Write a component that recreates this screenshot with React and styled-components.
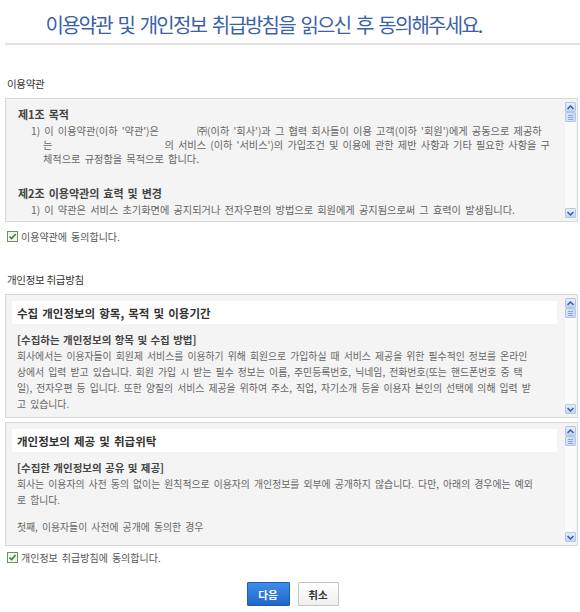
import React from "react";
import styled, { createGlobalStyle } from "styled-components";

const GlobalStyle = createGlobalStyle`
  html, body { margin: 0; padding: 0; background: #fff; }
  body {
    font-family: "Noto Sans CJK KR", "Noto Sans", sans-serif;
    color: #555;
  }
  * { box-sizing: border-box; }
`;

const Page = styled.div`
  width: 580px;
  padding-left: 5px;
  display: flex;
  flex-direction: column;
`;

const Header = styled.header`
  height: 45px;
  padding: 5px 58px 0 0;
  border-bottom: 2px solid #e2e2e2;
  display: flex;
  align-items: center;
  justify-content: center;
`;

const Title = styled.h1`
  margin: 0;
  font-size: 20px;
  font-weight: 400;
  letter-spacing: -1.8px;
  word-spacing: 3px;
  color: #3b61a8;
  white-space: nowrap;
`;

const SectionLabel = styled.h2`
  margin: ${(p) => p.$top}px 0 7px 2px;
  font-size: 10.5px;
  line-height: 14px;
  font-weight: 400;
  letter-spacing: -0.3px;
  color: #333;
`;

const Box = styled.div`
  height: 124px;
  margin-right: 2px;
  margin-top: ${(p) => p.$top || 0}px;
  border: 1px solid #d9d9d9;
  background: #f4f4f4;
  display: flex;
`;

const BoxContent = styled.div`
  flex: 1;
  min-width: 0;
  overflow: hidden;
  padding: ${(p) => p.$pad};
  white-space: nowrap;
`;

const Article = styled.div`
  margin-bottom: 20px;
`;

const ArticleTitle = styled.div`
  font-size: 11px;
  line-height: 14px;
  font-weight: 700;
  word-spacing: 1.5px;
  color: #444;
  margin-bottom: 3px;
`;

const Line = styled.div`
  font-size: ${(p) => p.$size || 9.85}px;
  line-height: ${(p) => p.$lh || 14}px;
  word-spacing: 1.9px;
  color: #666;
  padding-left: ${(p) => p.$indent || 0}px;
`;

const Blank = styled.span`
  display: inline-block;
  width: ${(p) => p.$w}px;
`;

const Band = styled.div`
  height: 23px;
  background: #fff;
  margin-right: 8px;
  padding-left: 5px;
  display: flex;
  align-items: center;
  font-size: 11.5px;
  font-weight: 700;
  word-spacing: 1.5px;
  color: #333;
`;

const SubBody = styled.div`
  padding: 9px 5px 0;
`;

const SubTitle = styled.div`
  font-size: 10.5px;
  line-height: 14px;
  font-weight: 700;
  word-spacing: 1px;
  color: #444;
  margin-bottom: 1px;
`;

const Gap = styled.div`
  height: ${(p) => p.$h}px;
`;

const ScrollTrack = styled.div`
  width: 11px;
  margin: 3px 1px 3px 0;
  background: #fbfbfb;
  display: flex;
  flex-direction: column;
  justify-content: space-between;
`;

const ArrowBtn = styled.div`
  width: 11px;
  height: 10px;
  border: 1px solid #b5c7e6;
  border-radius: 1px;
  background: linear-gradient(#e6eefb, #c4d5f1);
  display: flex;
  align-items: center;
  justify-content: center;
`;

const Thumb = styled.div`
  width: 11px;
  height: 10px;
  border: 1px solid #b5c7e6;
  border-radius: 1px;
  background: linear-gradient(90deg, #d7e3f7, #c9d9f3);
  display: flex;
  flex-direction: column;
  justify-content: center;
  align-items: center;
  gap: 1px;
`;

const Grip = styled.span`
  width: 5px;
  height: 1px;
  background: #8ea8d8;
`;

const TopStack = styled.div`
  display: flex;
  flex-direction: column;
`;

const Chevron = ({ up }) => (
  <svg width="7" height="5" viewBox="0 0 7 5">
    <path
      d={up ? "M0.5 4 L3.5 1 L6.5 4" : "M0.5 1 L3.5 4 L6.5 1"}
      fill="none"
      stroke="#3a5ea6"
      strokeWidth="1.5"
    />
  </svg>
);

const Scrollbar = () => (
  <ScrollTrack>
    <TopStack>
      <ArrowBtn>
        <Chevron up />
      </ArrowBtn>
      <Thumb>
        <Grip />
        <Grip />
        <Grip />
      </Thumb>
    </TopStack>
    <ArrowBtn>
      <Chevron />
    </ArrowBtn>
  </ScrollTrack>
);

const AgreeRow = styled.label`
  display: flex;
  align-items: center;
  gap: 3px;
  margin: ${(p) => p.$top}px 0 0 2px;
  height: 14px;
  font-size: 10px;
  word-spacing: 1.8px;
  color: #555;
`;

const CheckIcon = () => (
  <svg width="11" height="11" viewBox="0 0 11 11">
    <rect x="0.5" y="0.5" width="10" height="10" fill="#eef7ea" stroke="#6f8f6c" />
    <path d="M2.5 5.5 L4.6 7.6 L8.6 3" fill="none" stroke="#2f8a2a" strokeWidth="1.6" />
  </svg>
);

const Buttons = styled.div`
  margin-top: 18px;
  display: flex;
  justify-content: center;
  gap: 8px;
`;

const Button = styled.button`
  height: 24px;
  width: ${(p) => p.$w}px;
  padding: 0;
  font-family: inherit;
  font-size: 10.5px;
  font-weight: 700;
  border-radius: 1px;
  cursor: pointer;
  color: ${(p) => (p.$primary ? "#fff" : "#333")};
  border: 1px solid ${(p) => (p.$primary ? "#1c5cb8" : "#c5c5c5")};
  background: ${(p) =>
    p.$primary
      ? "linear-gradient(#3f8de8, #1f68cc)"
      : "linear-gradient(#ffffff, #efefef)"};
`;

export default function App() {
  return (
    <>
      <GlobalStyle />
      <Page>
        <Header>
          <Title>이용약관 및 개인정보 취급방침을 읽으신 후 동의해주세요.</Title>
        </Header>

        <SectionLabel $top={32}>이용약관</SectionLabel>
        <Box>
          <BoxContent $pad="8px 0 0 12px">
            <Article>
              <ArticleTitle>제1조 목적</ArticleTitle>
              <Line $indent={13} $size={10.2}>
                1) 이 이용약관(이하 '약관')은<Blank $w={38} />㈜(이하 '회사')과 그 협력 회사들이 이용 고객(이하 '회원')에게 공동으로 제공하
              </Line>
              <Line $indent={25} $size={10.2}>
                는<Blank $w={112} />의 서비스 (이하 '서비스')의 가입조건 및 이용에 관한 제반 사항과 기타 필요한 사항을 구
              </Line>
              <Line $indent={25} $size={10.2}>체적으로 규정함을 목적으로 합니다.</Line>
            </Article>
            <Article>
              <ArticleTitle>제2조 이용약관의 효력 및 변경</ArticleTitle>
              <Line $indent={13} $size={10.2}>
                1) 이 약관은 서비스 초기화면에 공지되거나 전자우편의 방법으로 회원에게 공지됨으로써 그 효력이 발생됩니다.
              </Line>
            </Article>
          </BoxContent>
          <Scrollbar />
        </Box>
        <AgreeRow $top={7}>
          <CheckIcon />
          이용약관에 동의합니다.
        </AgreeRow>

        <SectionLabel $top={30}>개인정보 취급방침</SectionLabel>
        <Box>
          <BoxContent $pad="6px 0 0 6px">
            <Band>수집 개인정보의 항목, 목적 및 이용기간</Band>
            <SubBody>
              <SubTitle>[수집하는 개인정보의 항목 및 수집 방법]</SubTitle>
              <Line $lh={16}>
                회사에서는 이용자들이 회원제 서비스를 이용하기 위해 회원으로 가입하실 때 서비스 제공을 위한 필수적인 정보를 온라인
              </Line>
              <Line $lh={16}>
                상에서 입력 받고 있습니다. 회원 가입 시 받는 필수 정보는 이름, 주민등록번호, 닉네임, 전화번호(또는 핸드폰번호 중 택
              </Line>
              <Line $lh={16}>
                일), 전자우편 등 입니다. 또한 양질의 서비스 제공을 위하여 주소, 직업, 자기소개 등을 이용자 본인의 선택에 의해 입력 받
              </Line>
              <Line $lh={16}>고 있습니다.</Line>
            </SubBody>
          </BoxContent>
          <Scrollbar />
        </Box>
        <Box $top={4}>
          <BoxContent $pad="6px 0 0 6px">
            <Band>개인정보의 제공 및 취급위탁</Band>
            <SubBody>
              <SubTitle>[수집한 개인정보의 공유 및 제공]</SubTitle>
              <Line $lh={16}>
                회사는 이용자의 사전 동의 없이는 원칙적으로 이용자의 개인정보를 외부에 공개하지 않습니다. 다만, 아래의 경우에는 예외
              </Line>
              <Line $lh={16}>로 합니다.</Line>
              <Gap $h={11} />
              <Line $lh={16}>첫째, 이용자들이 사전에 공개에 동의한 경우</Line>
            </SubBody>
          </BoxContent>
          <Scrollbar />
        </Box>
        <AgreeRow $top={4}>
          <CheckIcon />
          개인정보 취급방침에 동의합니다.
        </AgreeRow>

        <Buttons>
          <Button $primary $w={43}>다음</Button>
          <Button $w={41}>취소</Button>
        </Buttons>
      </Page>
    </>
  );
}
